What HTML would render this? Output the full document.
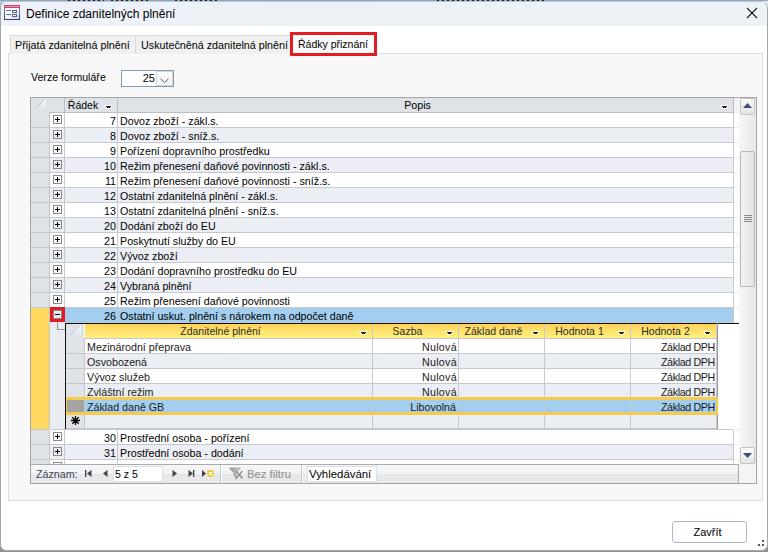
<!DOCTYPE html><html><head><meta charset="utf-8"><title>Definice</title><style>
*{box-sizing:border-box;margin:0;padding:0}
html,body{width:768px;height:552px;overflow:hidden}
body{position:relative;background:#8e9296;font-family:"Liberation Sans",sans-serif;font-size:10.7px;color:#000;line-height:14px}
.a{position:absolute}
.t{position:absolute;white-space:nowrap}
.r{position:absolute;white-space:nowrap;text-align:right}
.c{position:absolute;white-space:nowrap;text-align:center}
</style></head><body>
<div class="a" style="left:0;top:0;width:768px;height:2px;background:#93a5b8"></div>
<div class="a" style="left:68px;top:0;width:36px;height:1px;background:repeating-linear-gradient(90deg,#1a1a1a 0 2px,transparent 2px 5px)"></div>
<div class="a" style="left:111px;top:0;width:37px;height:1px;background:repeating-linear-gradient(90deg,#1a1a1a 0 2px,transparent 2px 5px)"></div>
<div class="a" style="left:175px;top:0;width:44px;height:1px;background:repeating-linear-gradient(90deg,#1a1a1a 0 2px,transparent 2px 5px)"></div>
<div class="a" style="left:437px;top:0;width:107px;height:1px;background:repeating-linear-gradient(90deg,#1a1a1a 0 2px,transparent 2px 5px)"></div>
<div class="a" style="left:754px;top:1px;width:14px;height:9px;background:#ececec"></div>
<div class="a" style="left:0;top:1px;width:9px;height:9px;background:#b6cbe0"></div>
<div class="a" style="left:0;top:1px;width:768px;height:550px;background:#fff;border:1px solid #a3a7ab;border-top-color:#b9c6d3;border-radius:7px 7px 6px 6px;overflow:hidden"></div>
<div class="a" style="left:1px;top:2px;width:766px;height:24px;background:linear-gradient(90deg,#eef1f9,#ebf3f8);border-radius:6px 6px 0 0"></div>
<svg class="a" style="left:4px;top:5px" width="16" height="15" viewBox="0 0 16 15" shape-rendering="crispEdges">
<defs><linearGradient id="ig" x1="0" y1="0" x2="1" y2="1"><stop offset="0" stop-color="#ffffff"/><stop offset="0.5" stop-color="#f4f6fb"/><stop offset="1" stop-color="#c9d4ee"/></linearGradient>
<linearGradient id="ib" x1="0" y1="0" x2="0" y2="1"><stop offset="0" stop-color="#8e9bb3"/><stop offset="1" stop-color="#34425f"/></linearGradient></defs>
<rect x="0" y="0" width="16" height="15" fill="url(#ib)"/>
<rect x="1" y="3" width="14" height="11" fill="url(#ig)"/>
<rect x="0" y="0" width="16" height="3" fill="#c64470"/>
<rect x="1" y="1" width="14" height="1" fill="#e593ae"/>
<rect x="2" y="5" width="5" height="1" fill="#6276a6"/>
<rect x="2" y="9" width="5" height="1" fill="#6276a6"/>
<rect x="8" y="5" width="5" height="3" fill="#56668f"/>
<rect x="9" y="6" width="3" height="1" fill="#ffffff"/>
<rect x="8" y="9" width="5" height="3" fill="#56668f"/>
<rect x="9" y="10" width="3" height="1" fill="#ffffff"/>
</svg>
<div class="t" style="left:26px;top:6px;font-size:12px;line-height:16px;color:#000">Definice zdanitelných plnění</div>
<svg class="a" style="left:746px;top:7px" width="12" height="12" viewBox="0 0 12 12"><path d="M1 1L11 11M11 1L1 11" stroke="#1a1a1a" stroke-width="1.1"/></svg>
<div class="a" style="left:8px;top:53px;width:755px;height:448px;background:#f8f8f8;border:1px solid #dcdcdc"></div>
<div class="a" style="left:10px;top:35px;width:126px;height:19px;background:#f0f0f0;border:1px solid #dadada;border-bottom:none"></div>
<div class="t" style="left:15px;top:38px;font-size:10.75px">Přijatá zdanitelná plnění</div>
<div class="a" style="left:135px;top:35px;width:156px;height:19px;background:#f0f0f0;border:1px solid #dadada;border-bottom:none"></div>
<div class="t" style="left:141px;top:38px;font-size:10.75px">Uskutečněná zdanitelná plnění</div>
<div class="a" style="left:290px;top:32px;width:87px;height:24px;background:#fbfbfb;border:3px solid #e31b23"></div>
<div class="t" style="left:298px;top:37px;font-size:10.5px">Řádky přiznání</div>
<div class="t" style="left:31px;top:70px;font-size:10.6px">Verze formuláře</div>
<div class="a" style="left:121px;top:70px;width:53px;height:17px;background:#fff;border:1px solid #7f9db9"></div>
<div class="r" style="left:122px;top:71px;width:33px;font-size:11px">25</div>
<div class="a" style="left:156px;top:71px;width:17px;height:15px;background:linear-gradient(#fdfdfd,#f3f3f3);border:1px solid #d5d5d5"></div>
<svg class="a" style="left:160px;top:78px" width="9" height="6" viewBox="0 0 9 6"><path d="M0.5 0.8L4.5 4.6L8.5 0.8" fill="none" stroke="#555" stroke-width="1"/></svg>
<div class="a" style="left:30px;top:97px;width:727px;height:387px;background:#fff;border:1px solid #a5a5a5;overflow:hidden">
<div class="a" style="left:0;top:0;width:702px;height:15px;background:#dfe2e7"></div>
<div class="a" style="left:18px;top:14px;width:684px;height:1px;background:#babdc2"></div>
<svg class="a" style="left:4px;top:0px" width="12" height="12" viewBox="0 0 12 12"><defs><linearGradient id="sg1" x1="0" y1="1" x2="1" y2="0"><stop offset="0" stop-color="#dcdfe4"/><stop offset="1" stop-color="#f7f8fa"/></linearGradient></defs><path d="M0 11L11 0V11Z" fill="url(#sg1)"/><path d="M0.5 10.5L10.5 0.5" stroke="#aac6ea" stroke-width="1"/></svg>
<div class="a" style="left:33px;top:0;width:1px;height:15px;background:#babdc2"></div>
<div class="a" style="left:86px;top:0;width:1px;height:15px;background:#babdc2"></div>
<div class="a" style="left:702px;top:0;width:1px;height:15px;background:#babdc2"></div>
<div class="c" style="left:34px;top:0;width:36px;font-size:10.5px;line-height:15px;color:#000">Řádek</div>
<svg class="a" style="left:73px;top:7px" width="9" height="5" viewBox="0 0 9 5" shape-rendering="crispEdges"><path d="M0 0H9V1H8V2H7V3H6V4H3V3H2V2H1V1H0Z" fill="#fff" opacity="0.85"/><rect x="2" y="1" width="5" height="1" fill="#1c1c1c"/><rect x="3" y="2" width="3" height="1" fill="#1c1c1c"/></svg>
<div class="c" style="left:87px;top:0;width:599px;font-size:10.7px;line-height:15px;color:#000">Popis</div>
<svg class="a" style="left:689px;top:7px" width="9" height="5" viewBox="0 0 9 5" shape-rendering="crispEdges"><path d="M0 0H9V1H8V2H7V3H6V4H3V3H2V2H1V1H0Z" fill="#fff" opacity="0.85"/><rect x="2" y="1" width="5" height="1" fill="#1c1c1c"/><rect x="3" y="2" width="3" height="1" fill="#1c1c1c"/></svg>
<div class="a" style="left:703px;top:0;width:5px;height:15px;background:#f1f3f8"></div>
<div class="a" style="left:0;top:15px;width:18px;height:15px;background:#dfe2e7"></div>
<div class="a" style="left:0;top:29px;width:18px;height:1px;background:#c3c6cb"></div>
<div class="a" style="left:18px;top:15px;width:1px;height:15px;background:#c3c6cb"></div>
<div class="a" style="left:19px;top:15px;width:683px;height:14px;background:#fff"></div>
<div class="a" style="left:19px;top:29px;width:683px;height:1px;background:#c6c9cd"></div>
<div class="a" style="left:703px;top:29px;width:5px;height:1px;background:#ececed"></div>
<div class="a" style="left:33px;top:15px;width:1px;height:15px;background:#c6c9cd"></div>
<div class="a" style="left:86px;top:15px;width:1px;height:15px;background:#c6c9cd"></div>
<div class="a" style="left:702px;top:15px;width:1px;height:15px;background:#c6c9cd"></div>
<div class="a" style="left:22px;top:17px;width:9px;height:9px;background:#fff;border:1px solid #8a8a8a"></div>
<div class="a" style="left:24px;top:21px;width:5px;height:1px;background:#000"></div>
<div class="a" style="left:26px;top:19px;width:1px;height:5px;background:#000"></div>
<div class="r" style="left:34px;top:16px;width:51px;font-size:10.7px;line-height:15px">7</div>
<div class="t" style="left:89px;top:16px;font-size:10.7px;line-height:15px">Dovoz zboží - zákl.s.</div>
<div class="a" style="left:0;top:30px;width:18px;height:15px;background:#dfe2e7"></div>
<div class="a" style="left:0;top:44px;width:18px;height:1px;background:#c3c6cb"></div>
<div class="a" style="left:18px;top:30px;width:1px;height:15px;background:#c3c6cb"></div>
<div class="a" style="left:19px;top:30px;width:683px;height:14px;background:#ebeef4"></div>
<div class="a" style="left:19px;top:44px;width:683px;height:1px;background:#c6c9cd"></div>
<div class="a" style="left:703px;top:44px;width:5px;height:1px;background:#ececed"></div>
<div class="a" style="left:33px;top:30px;width:1px;height:15px;background:#c6c9cd"></div>
<div class="a" style="left:86px;top:30px;width:1px;height:15px;background:#c6c9cd"></div>
<div class="a" style="left:702px;top:30px;width:1px;height:15px;background:#c6c9cd"></div>
<div class="a" style="left:22px;top:32px;width:9px;height:9px;background:#ebeef4;border:1px solid #8a8a8a"></div>
<div class="a" style="left:24px;top:36px;width:5px;height:1px;background:#000"></div>
<div class="a" style="left:26px;top:34px;width:1px;height:5px;background:#000"></div>
<div class="r" style="left:34px;top:31px;width:51px;font-size:10.7px;line-height:15px">8</div>
<div class="t" style="left:89px;top:31px;font-size:10.7px;line-height:15px">Dovoz zboží - sníž.s.</div>
<div class="a" style="left:0;top:45px;width:18px;height:15px;background:#dfe2e7"></div>
<div class="a" style="left:0;top:59px;width:18px;height:1px;background:#c3c6cb"></div>
<div class="a" style="left:18px;top:45px;width:1px;height:15px;background:#c3c6cb"></div>
<div class="a" style="left:19px;top:45px;width:683px;height:14px;background:#fff"></div>
<div class="a" style="left:19px;top:59px;width:683px;height:1px;background:#c6c9cd"></div>
<div class="a" style="left:703px;top:59px;width:5px;height:1px;background:#ececed"></div>
<div class="a" style="left:33px;top:45px;width:1px;height:15px;background:#c6c9cd"></div>
<div class="a" style="left:86px;top:45px;width:1px;height:15px;background:#c6c9cd"></div>
<div class="a" style="left:702px;top:45px;width:1px;height:15px;background:#c6c9cd"></div>
<div class="a" style="left:22px;top:47px;width:9px;height:9px;background:#fff;border:1px solid #8a8a8a"></div>
<div class="a" style="left:24px;top:51px;width:5px;height:1px;background:#000"></div>
<div class="a" style="left:26px;top:49px;width:1px;height:5px;background:#000"></div>
<div class="r" style="left:34px;top:46px;width:51px;font-size:10.7px;line-height:15px">9</div>
<div class="t" style="left:89px;top:46px;font-size:10.7px;line-height:15px">Pořízení dopravního prostředku</div>
<div class="a" style="left:0;top:60px;width:18px;height:15px;background:#dfe2e7"></div>
<div class="a" style="left:0;top:74px;width:18px;height:1px;background:#c3c6cb"></div>
<div class="a" style="left:18px;top:60px;width:1px;height:15px;background:#c3c6cb"></div>
<div class="a" style="left:19px;top:60px;width:683px;height:14px;background:#ebeef4"></div>
<div class="a" style="left:19px;top:74px;width:683px;height:1px;background:#c6c9cd"></div>
<div class="a" style="left:703px;top:74px;width:5px;height:1px;background:#ececed"></div>
<div class="a" style="left:33px;top:60px;width:1px;height:15px;background:#c6c9cd"></div>
<div class="a" style="left:86px;top:60px;width:1px;height:15px;background:#c6c9cd"></div>
<div class="a" style="left:702px;top:60px;width:1px;height:15px;background:#c6c9cd"></div>
<div class="a" style="left:22px;top:62px;width:9px;height:9px;background:#ebeef4;border:1px solid #8a8a8a"></div>
<div class="a" style="left:24px;top:66px;width:5px;height:1px;background:#000"></div>
<div class="a" style="left:26px;top:64px;width:1px;height:5px;background:#000"></div>
<div class="r" style="left:34px;top:61px;width:51px;font-size:10.7px;line-height:15px">10</div>
<div class="t" style="left:89px;top:61px;font-size:10.7px;line-height:15px">Režim přenesení daňové povinnosti - zákl.s.</div>
<div class="a" style="left:0;top:75px;width:18px;height:15px;background:#dfe2e7"></div>
<div class="a" style="left:0;top:89px;width:18px;height:1px;background:#c3c6cb"></div>
<div class="a" style="left:18px;top:75px;width:1px;height:15px;background:#c3c6cb"></div>
<div class="a" style="left:19px;top:75px;width:683px;height:14px;background:#fff"></div>
<div class="a" style="left:19px;top:89px;width:683px;height:1px;background:#c6c9cd"></div>
<div class="a" style="left:703px;top:89px;width:5px;height:1px;background:#ececed"></div>
<div class="a" style="left:33px;top:75px;width:1px;height:15px;background:#c6c9cd"></div>
<div class="a" style="left:86px;top:75px;width:1px;height:15px;background:#c6c9cd"></div>
<div class="a" style="left:702px;top:75px;width:1px;height:15px;background:#c6c9cd"></div>
<div class="a" style="left:22px;top:77px;width:9px;height:9px;background:#fff;border:1px solid #8a8a8a"></div>
<div class="a" style="left:24px;top:81px;width:5px;height:1px;background:#000"></div>
<div class="a" style="left:26px;top:79px;width:1px;height:5px;background:#000"></div>
<div class="r" style="left:34px;top:76px;width:51px;font-size:10.7px;line-height:15px">11</div>
<div class="t" style="left:89px;top:76px;font-size:10.7px;line-height:15px">Režim přenesení daňové povinnosti - sníž.s.</div>
<div class="a" style="left:0;top:90px;width:18px;height:15px;background:#dfe2e7"></div>
<div class="a" style="left:0;top:104px;width:18px;height:1px;background:#c3c6cb"></div>
<div class="a" style="left:18px;top:90px;width:1px;height:15px;background:#c3c6cb"></div>
<div class="a" style="left:19px;top:90px;width:683px;height:14px;background:#ebeef4"></div>
<div class="a" style="left:19px;top:104px;width:683px;height:1px;background:#c6c9cd"></div>
<div class="a" style="left:703px;top:104px;width:5px;height:1px;background:#ececed"></div>
<div class="a" style="left:33px;top:90px;width:1px;height:15px;background:#c6c9cd"></div>
<div class="a" style="left:86px;top:90px;width:1px;height:15px;background:#c6c9cd"></div>
<div class="a" style="left:702px;top:90px;width:1px;height:15px;background:#c6c9cd"></div>
<div class="a" style="left:22px;top:92px;width:9px;height:9px;background:#ebeef4;border:1px solid #8a8a8a"></div>
<div class="a" style="left:24px;top:96px;width:5px;height:1px;background:#000"></div>
<div class="a" style="left:26px;top:94px;width:1px;height:5px;background:#000"></div>
<div class="r" style="left:34px;top:91px;width:51px;font-size:10.7px;line-height:15px">12</div>
<div class="t" style="left:89px;top:91px;font-size:10.7px;line-height:15px">Ostatní zdanitelná plnění - zákl.s.</div>
<div class="a" style="left:0;top:105px;width:18px;height:15px;background:#dfe2e7"></div>
<div class="a" style="left:0;top:119px;width:18px;height:1px;background:#c3c6cb"></div>
<div class="a" style="left:18px;top:105px;width:1px;height:15px;background:#c3c6cb"></div>
<div class="a" style="left:19px;top:105px;width:683px;height:14px;background:#fff"></div>
<div class="a" style="left:19px;top:119px;width:683px;height:1px;background:#c6c9cd"></div>
<div class="a" style="left:703px;top:119px;width:5px;height:1px;background:#ececed"></div>
<div class="a" style="left:33px;top:105px;width:1px;height:15px;background:#c6c9cd"></div>
<div class="a" style="left:86px;top:105px;width:1px;height:15px;background:#c6c9cd"></div>
<div class="a" style="left:702px;top:105px;width:1px;height:15px;background:#c6c9cd"></div>
<div class="a" style="left:22px;top:107px;width:9px;height:9px;background:#fff;border:1px solid #8a8a8a"></div>
<div class="a" style="left:24px;top:111px;width:5px;height:1px;background:#000"></div>
<div class="a" style="left:26px;top:109px;width:1px;height:5px;background:#000"></div>
<div class="r" style="left:34px;top:106px;width:51px;font-size:10.7px;line-height:15px">13</div>
<div class="t" style="left:89px;top:106px;font-size:10.7px;line-height:15px">Ostatní zdanitelná plnění - sníž.s.</div>
<div class="a" style="left:0;top:120px;width:18px;height:15px;background:#dfe2e7"></div>
<div class="a" style="left:0;top:134px;width:18px;height:1px;background:#c3c6cb"></div>
<div class="a" style="left:18px;top:120px;width:1px;height:15px;background:#c3c6cb"></div>
<div class="a" style="left:19px;top:120px;width:683px;height:14px;background:#ebeef4"></div>
<div class="a" style="left:19px;top:134px;width:683px;height:1px;background:#c6c9cd"></div>
<div class="a" style="left:703px;top:134px;width:5px;height:1px;background:#ececed"></div>
<div class="a" style="left:33px;top:120px;width:1px;height:15px;background:#c6c9cd"></div>
<div class="a" style="left:86px;top:120px;width:1px;height:15px;background:#c6c9cd"></div>
<div class="a" style="left:702px;top:120px;width:1px;height:15px;background:#c6c9cd"></div>
<div class="a" style="left:22px;top:122px;width:9px;height:9px;background:#ebeef4;border:1px solid #8a8a8a"></div>
<div class="a" style="left:24px;top:126px;width:5px;height:1px;background:#000"></div>
<div class="a" style="left:26px;top:124px;width:1px;height:5px;background:#000"></div>
<div class="r" style="left:34px;top:121px;width:51px;font-size:10.7px;line-height:15px">20</div>
<div class="t" style="left:89px;top:121px;font-size:10.7px;line-height:15px">Dodání zboží do EU</div>
<div class="a" style="left:0;top:135px;width:18px;height:15px;background:#dfe2e7"></div>
<div class="a" style="left:0;top:149px;width:18px;height:1px;background:#c3c6cb"></div>
<div class="a" style="left:18px;top:135px;width:1px;height:15px;background:#c3c6cb"></div>
<div class="a" style="left:19px;top:135px;width:683px;height:14px;background:#fff"></div>
<div class="a" style="left:19px;top:149px;width:683px;height:1px;background:#c6c9cd"></div>
<div class="a" style="left:703px;top:149px;width:5px;height:1px;background:#ececed"></div>
<div class="a" style="left:33px;top:135px;width:1px;height:15px;background:#c6c9cd"></div>
<div class="a" style="left:86px;top:135px;width:1px;height:15px;background:#c6c9cd"></div>
<div class="a" style="left:702px;top:135px;width:1px;height:15px;background:#c6c9cd"></div>
<div class="a" style="left:22px;top:137px;width:9px;height:9px;background:#fff;border:1px solid #8a8a8a"></div>
<div class="a" style="left:24px;top:141px;width:5px;height:1px;background:#000"></div>
<div class="a" style="left:26px;top:139px;width:1px;height:5px;background:#000"></div>
<div class="r" style="left:34px;top:136px;width:51px;font-size:10.7px;line-height:15px">21</div>
<div class="t" style="left:89px;top:136px;font-size:10.7px;line-height:15px">Poskytnutí služby do EU</div>
<div class="a" style="left:0;top:150px;width:18px;height:15px;background:#dfe2e7"></div>
<div class="a" style="left:0;top:164px;width:18px;height:1px;background:#c3c6cb"></div>
<div class="a" style="left:18px;top:150px;width:1px;height:15px;background:#c3c6cb"></div>
<div class="a" style="left:19px;top:150px;width:683px;height:14px;background:#ebeef4"></div>
<div class="a" style="left:19px;top:164px;width:683px;height:1px;background:#c6c9cd"></div>
<div class="a" style="left:703px;top:164px;width:5px;height:1px;background:#ececed"></div>
<div class="a" style="left:33px;top:150px;width:1px;height:15px;background:#c6c9cd"></div>
<div class="a" style="left:86px;top:150px;width:1px;height:15px;background:#c6c9cd"></div>
<div class="a" style="left:702px;top:150px;width:1px;height:15px;background:#c6c9cd"></div>
<div class="a" style="left:22px;top:152px;width:9px;height:9px;background:#ebeef4;border:1px solid #8a8a8a"></div>
<div class="a" style="left:24px;top:156px;width:5px;height:1px;background:#000"></div>
<div class="a" style="left:26px;top:154px;width:1px;height:5px;background:#000"></div>
<div class="r" style="left:34px;top:151px;width:51px;font-size:10.7px;line-height:15px">22</div>
<div class="t" style="left:89px;top:151px;font-size:10.7px;line-height:15px">Vývoz zboží</div>
<div class="a" style="left:0;top:165px;width:18px;height:15px;background:#dfe2e7"></div>
<div class="a" style="left:0;top:179px;width:18px;height:1px;background:#c3c6cb"></div>
<div class="a" style="left:18px;top:165px;width:1px;height:15px;background:#c3c6cb"></div>
<div class="a" style="left:19px;top:165px;width:683px;height:14px;background:#fff"></div>
<div class="a" style="left:19px;top:179px;width:683px;height:1px;background:#c6c9cd"></div>
<div class="a" style="left:703px;top:179px;width:5px;height:1px;background:#ececed"></div>
<div class="a" style="left:33px;top:165px;width:1px;height:15px;background:#c6c9cd"></div>
<div class="a" style="left:86px;top:165px;width:1px;height:15px;background:#c6c9cd"></div>
<div class="a" style="left:702px;top:165px;width:1px;height:15px;background:#c6c9cd"></div>
<div class="a" style="left:22px;top:167px;width:9px;height:9px;background:#fff;border:1px solid #8a8a8a"></div>
<div class="a" style="left:24px;top:171px;width:5px;height:1px;background:#000"></div>
<div class="a" style="left:26px;top:169px;width:1px;height:5px;background:#000"></div>
<div class="r" style="left:34px;top:166px;width:51px;font-size:10.7px;line-height:15px">23</div>
<div class="t" style="left:89px;top:166px;font-size:10.7px;line-height:15px">Dodání dopravního prostředku do EU</div>
<div class="a" style="left:0;top:180px;width:18px;height:15px;background:#dfe2e7"></div>
<div class="a" style="left:0;top:194px;width:18px;height:1px;background:#c3c6cb"></div>
<div class="a" style="left:18px;top:180px;width:1px;height:15px;background:#c3c6cb"></div>
<div class="a" style="left:19px;top:180px;width:683px;height:14px;background:#ebeef4"></div>
<div class="a" style="left:19px;top:194px;width:683px;height:1px;background:#c6c9cd"></div>
<div class="a" style="left:703px;top:194px;width:5px;height:1px;background:#ececed"></div>
<div class="a" style="left:33px;top:180px;width:1px;height:15px;background:#c6c9cd"></div>
<div class="a" style="left:86px;top:180px;width:1px;height:15px;background:#c6c9cd"></div>
<div class="a" style="left:702px;top:180px;width:1px;height:15px;background:#c6c9cd"></div>
<div class="a" style="left:22px;top:182px;width:9px;height:9px;background:#ebeef4;border:1px solid #8a8a8a"></div>
<div class="a" style="left:24px;top:186px;width:5px;height:1px;background:#000"></div>
<div class="a" style="left:26px;top:184px;width:1px;height:5px;background:#000"></div>
<div class="r" style="left:34px;top:181px;width:51px;font-size:10.7px;line-height:15px">24</div>
<div class="t" style="left:89px;top:181px;font-size:10.7px;line-height:15px">Vybraná plnění</div>
<div class="a" style="left:0;top:195px;width:18px;height:15px;background:#dfe2e7"></div>
<div class="a" style="left:0;top:209px;width:18px;height:1px;background:#c3c6cb"></div>
<div class="a" style="left:18px;top:195px;width:1px;height:15px;background:#c3c6cb"></div>
<div class="a" style="left:19px;top:195px;width:683px;height:14px;background:#fff"></div>
<div class="a" style="left:19px;top:209px;width:683px;height:1px;background:#c6c9cd"></div>
<div class="a" style="left:703px;top:209px;width:5px;height:1px;background:#ececed"></div>
<div class="a" style="left:33px;top:195px;width:1px;height:15px;background:#c6c9cd"></div>
<div class="a" style="left:86px;top:195px;width:1px;height:15px;background:#c6c9cd"></div>
<div class="a" style="left:702px;top:195px;width:1px;height:15px;background:#c6c9cd"></div>
<div class="a" style="left:22px;top:197px;width:9px;height:9px;background:#fff;border:1px solid #8a8a8a"></div>
<div class="a" style="left:24px;top:201px;width:5px;height:1px;background:#000"></div>
<div class="a" style="left:26px;top:199px;width:1px;height:5px;background:#000"></div>
<div class="r" style="left:34px;top:196px;width:51px;font-size:10.7px;line-height:15px">25</div>
<div class="t" style="left:89px;top:196px;font-size:10.7px;line-height:15px">Režim přenesení daňové povinnosti</div>
<div class="a" style="left:0;top:210px;width:18px;height:15px;background:#ffd95f"></div>
<div class="a" style="left:18px;top:210px;width:1px;height:15px;background:#c3c6cb"></div>
<div class="a" style="left:19px;top:210px;width:683px;height:14px;background:#a3cef0"></div>
<div class="a" style="left:19px;top:224px;width:683px;height:1px;background:#c6c9cd"></div>
<div class="a" style="left:703px;top:224px;width:5px;height:1px;background:#ececed"></div>
<div class="a" style="left:33px;top:210px;width:1px;height:15px;background:#c6c9cd"></div>
<div class="a" style="left:86px;top:210px;width:1px;height:15px;background:#c6c9cd"></div>
<div class="a" style="left:702px;top:210px;width:1px;height:15px;background:#c6c9cd"></div>
<div class="a" style="left:19px;top:209px;width:15px;height:15px;background:#e31b23"></div>
<div class="a" style="left:22px;top:212px;width:9px;height:9px;background:#e6ebef;border:1px solid #8a8a8a"></div>
<div class="a" style="left:24px;top:216px;width:5px;height:1px;background:#000"></div>
<div class="r" style="left:34px;top:211px;width:51px;font-size:10.7px;line-height:15px">26</div>
<div class="t" style="left:89px;top:211px;font-size:10.7px;line-height:15px">Ostatní uskut. plnění s nárokem na odpočet daně</div>
<div class="a" style="left:0;top:332px;width:18px;height:15px;background:#dfe2e7"></div>
<div class="a" style="left:0;top:346px;width:18px;height:1px;background:#c3c6cb"></div>
<div class="a" style="left:18px;top:332px;width:1px;height:15px;background:#c3c6cb"></div>
<div class="a" style="left:19px;top:332px;width:683px;height:14px;background:#fff"></div>
<div class="a" style="left:19px;top:346px;width:683px;height:1px;background:#c6c9cd"></div>
<div class="a" style="left:703px;top:346px;width:5px;height:1px;background:#ececed"></div>
<div class="a" style="left:33px;top:332px;width:1px;height:15px;background:#c6c9cd"></div>
<div class="a" style="left:86px;top:332px;width:1px;height:15px;background:#c6c9cd"></div>
<div class="a" style="left:702px;top:332px;width:1px;height:15px;background:#c6c9cd"></div>
<div class="a" style="left:22px;top:334px;width:9px;height:9px;background:#fff;border:1px solid #8a8a8a"></div>
<div class="a" style="left:24px;top:338px;width:5px;height:1px;background:#000"></div>
<div class="a" style="left:26px;top:336px;width:1px;height:5px;background:#000"></div>
<div class="r" style="left:34px;top:333px;width:51px;font-size:10.7px;line-height:15px">30</div>
<div class="t" style="left:89px;top:333px;font-size:10.7px;line-height:15px">Prostřední osoba - pořízení</div>
<div class="a" style="left:0;top:347px;width:18px;height:15px;background:#dfe2e7"></div>
<div class="a" style="left:0;top:361px;width:18px;height:1px;background:#c3c6cb"></div>
<div class="a" style="left:18px;top:347px;width:1px;height:15px;background:#c3c6cb"></div>
<div class="a" style="left:19px;top:347px;width:683px;height:14px;background:#ebeef4"></div>
<div class="a" style="left:19px;top:361px;width:683px;height:1px;background:#c6c9cd"></div>
<div class="a" style="left:703px;top:361px;width:5px;height:1px;background:#ececed"></div>
<div class="a" style="left:33px;top:347px;width:1px;height:15px;background:#c6c9cd"></div>
<div class="a" style="left:86px;top:347px;width:1px;height:15px;background:#c6c9cd"></div>
<div class="a" style="left:702px;top:347px;width:1px;height:15px;background:#c6c9cd"></div>
<div class="a" style="left:22px;top:349px;width:9px;height:9px;background:#ebeef4;border:1px solid #8a8a8a"></div>
<div class="a" style="left:24px;top:353px;width:5px;height:1px;background:#000"></div>
<div class="a" style="left:26px;top:351px;width:1px;height:5px;background:#000"></div>
<div class="r" style="left:34px;top:348px;width:51px;font-size:10.7px;line-height:15px">31</div>
<div class="t" style="left:89px;top:348px;font-size:10.7px;line-height:15px">Prostřední osoba - dodání</div>
<div class="a" style="left:0;top:362px;width:18px;height:15px;background:#dfe2e7"></div>
<div class="a" style="left:0;top:376px;width:18px;height:1px;background:#c3c6cb"></div>
<div class="a" style="left:18px;top:362px;width:1px;height:15px;background:#c3c6cb"></div>
<div class="a" style="left:19px;top:362px;width:683px;height:14px;background:#fff"></div>
<div class="a" style="left:19px;top:376px;width:683px;height:1px;background:#c6c9cd"></div>
<div class="a" style="left:703px;top:376px;width:5px;height:1px;background:#ececed"></div>
<div class="a" style="left:33px;top:362px;width:1px;height:15px;background:#c6c9cd"></div>
<div class="a" style="left:86px;top:362px;width:1px;height:15px;background:#c6c9cd"></div>
<div class="a" style="left:702px;top:362px;width:1px;height:15px;background:#c6c9cd"></div>
<div class="a" style="left:22px;top:364px;width:9px;height:9px;background:#fff;border:1px solid #8a8a8a"></div>
<div class="a" style="left:24px;top:368px;width:5px;height:1px;background:#000"></div>
<div class="a" style="left:26px;top:366px;width:1px;height:5px;background:#000"></div>
<div class="r" style="left:34px;top:363px;width:51px;font-size:10.7px;line-height:15px">32</div>
<div class="t" style="left:89px;top:363px;font-size:10.7px;line-height:15px">Prostřední osoba - </div>
<div class="a" style="left:0;top:224px;width:18px;height:107px;background:#ffd95f"></div>
<div class="a" style="left:18px;top:224px;width:1px;height:107px;background:#c3c6cb"></div>
<div class="a" style="left:19px;top:224px;width:15px;height:107px;background:#e9ecf1"></div>
<div class="a" style="left:26px;top:224px;width:1px;height:8px;background:#8f949a"></div>
<div class="a" style="left:26px;top:231px;width:8px;height:1px;background:#8f949a"></div>
<div class="a" style="left:35px;top:225px;width:673px;height:106px;background:#fff"></div>
<div class="a" style="left:34px;top:225px;width:674px;height:1px;background:#111"></div>
<div class="a" style="left:34px;top:225px;width:1px;height:106px;background:#111"></div>
<div class="a" style="left:19px;top:331px;width:683px;height:1px;background:#c6c9cd"></div>
<div class="a" style="left:703px;top:331px;width:5px;height:1px;background:#ececed"></div>
<div class="a" style="left:0;top:331px;width:18px;height:1px;background:#c3c6cb"></div>
<div class="a" style="left:35px;top:226px;width:18px;height:105px;background:#dfe2e7"></div>
<svg class="a" style="left:39px;top:226px" width="12" height="12" viewBox="0 0 12 12"><defs><linearGradient id="sg2" x1="0" y1="1" x2="1" y2="0"><stop offset="0" stop-color="#dcdfe4"/><stop offset="1" stop-color="#f7f8fa"/></linearGradient></defs><path d="M0 11L11 0V11Z" fill="url(#sg2)"/><path d="M0.5 10.5L10.5 0.5" stroke="#aac6ea" stroke-width="1"/></svg>
<div class="a" style="left:53px;top:240px;width:1px;height:91px;background:#c3c6cb"></div>
<div class="a" style="left:35px;top:255px;width:18px;height:1px;background:#c3c6cb"></div>
<div class="a" style="left:35px;top:270px;width:18px;height:1px;background:#c3c6cb"></div>
<div class="a" style="left:35px;top:285px;width:18px;height:1px;background:#c3c6cb"></div>
<div class="a" style="left:35px;top:300px;width:18px;height:1px;background:#c3c6cb"></div>
<div class="a" style="left:35px;top:315px;width:18px;height:1px;background:#c3c6cb"></div>
<div class="a" style="left:54px;top:226px;width:631px;height:14px;background:linear-gradient(#fdd25a,#fff07f)"></div>
<div class="a" style="left:54px;top:240px;width:631px;height:1px;background:#c4c7cc"></div>
<div class="a" style="left:341px;top:226px;width:1px;height:105px;background:#c6c9cd"></div>
<div class="c" style="left:54px;top:226px;width:271px;font-size:10.5px;line-height:15px;color:#2b2b2b">Zdanitelné plnění</div>
<svg class="a" style="left:328px;top:233px" width="9" height="5" viewBox="0 0 9 5" shape-rendering="crispEdges"><path d="M0 0H9V1H8V2H7V3H6V4H3V3H2V2H1V1H0Z" fill="#fff" opacity="0.85"/><rect x="2" y="1" width="5" height="1" fill="#1c1c1c"/><rect x="3" y="2" width="3" height="1" fill="#1c1c1c"/></svg>
<div class="a" style="left:427px;top:226px;width:1px;height:105px;background:#c6c9cd"></div>
<div class="c" style="left:342px;top:226px;width:69px;font-size:10.5px;line-height:15px;color:#2b2b2b">Sazba</div>
<svg class="a" style="left:414px;top:233px" width="9" height="5" viewBox="0 0 9 5" shape-rendering="crispEdges"><path d="M0 0H9V1H8V2H7V3H6V4H3V3H2V2H1V1H0Z" fill="#fff" opacity="0.85"/><rect x="2" y="1" width="5" height="1" fill="#1c1c1c"/><rect x="3" y="2" width="3" height="1" fill="#1c1c1c"/></svg>
<div class="a" style="left:513px;top:226px;width:1px;height:105px;background:#c6c9cd"></div>
<div class="c" style="left:428px;top:226px;width:69px;font-size:10.5px;line-height:15px;color:#2b2b2b">Základ daně</div>
<svg class="a" style="left:500px;top:233px" width="9" height="5" viewBox="0 0 9 5" shape-rendering="crispEdges"><path d="M0 0H9V1H8V2H7V3H6V4H3V3H2V2H1V1H0Z" fill="#fff" opacity="0.85"/><rect x="2" y="1" width="5" height="1" fill="#1c1c1c"/><rect x="3" y="2" width="3" height="1" fill="#1c1c1c"/></svg>
<div class="a" style="left:599px;top:226px;width:1px;height:105px;background:#c6c9cd"></div>
<div class="c" style="left:514px;top:226px;width:69px;font-size:10.5px;line-height:15px;color:#2b2b2b">Hodnota 1</div>
<svg class="a" style="left:586px;top:233px" width="9" height="5" viewBox="0 0 9 5" shape-rendering="crispEdges"><path d="M0 0H9V1H8V2H7V3H6V4H3V3H2V2H1V1H0Z" fill="#fff" opacity="0.85"/><rect x="2" y="1" width="5" height="1" fill="#1c1c1c"/><rect x="3" y="2" width="3" height="1" fill="#1c1c1c"/></svg>
<div class="a" style="left:685px;top:226px;width:1px;height:105px;background:#c6c9cd"></div>
<div class="c" style="left:600px;top:226px;width:69px;font-size:10.5px;line-height:15px;color:#2b2b2b">Hodnota 2</div>
<svg class="a" style="left:672px;top:233px" width="9" height="5" viewBox="0 0 9 5" shape-rendering="crispEdges"><path d="M0 0H9V1H8V2H7V3H6V4H3V3H2V2H1V1H0Z" fill="#fff" opacity="0.85"/><rect x="2" y="1" width="5" height="1" fill="#1c1c1c"/><rect x="3" y="2" width="3" height="1" fill="#1c1c1c"/></svg>
<div class="a" style="left:686px;top:225px;width:1px;height:106px;background:#9a9a9a"></div>
<div class="a" style="left:54px;top:241px;width:631px;height:14px;background:#fff"></div>
<div class="a" style="left:54px;top:255px;width:631px;height:1px;background:#c6c9cd"></div>
<div class="a" style="left:341px;top:241px;width:1px;height:15px;background:#c6c9cd"></div>
<div class="a" style="left:427px;top:241px;width:1px;height:15px;background:#c6c9cd"></div>
<div class="a" style="left:513px;top:241px;width:1px;height:15px;background:#c6c9cd"></div>
<div class="a" style="left:599px;top:241px;width:1px;height:15px;background:#c6c9cd"></div>
<div class="a" style="left:685px;top:241px;width:1px;height:15px;background:#c6c9cd"></div>
<div class="t" style="left:56px;top:242px;font-size:10.7px;line-height:15px;color:#1a1a1a">Mezinárodní přeprava</div>
<div class="r" style="left:342px;top:242px;width:84px;font-size:10.7px;letter-spacing:0.3px;line-height:15px;color:#1a1a1a">Nulová</div>
<div class="r" style="left:600px;top:242px;width:84px;font-size:10.7px;letter-spacing:-0.35px;line-height:15px;color:#1a1a1a">Základ DPH</div>
<div class="a" style="left:54px;top:256px;width:631px;height:14px;background:#ebeef4"></div>
<div class="a" style="left:54px;top:270px;width:631px;height:1px;background:#c6c9cd"></div>
<div class="a" style="left:341px;top:256px;width:1px;height:15px;background:#c6c9cd"></div>
<div class="a" style="left:427px;top:256px;width:1px;height:15px;background:#c6c9cd"></div>
<div class="a" style="left:513px;top:256px;width:1px;height:15px;background:#c6c9cd"></div>
<div class="a" style="left:599px;top:256px;width:1px;height:15px;background:#c6c9cd"></div>
<div class="a" style="left:685px;top:256px;width:1px;height:15px;background:#c6c9cd"></div>
<div class="t" style="left:56px;top:257px;font-size:10.7px;line-height:15px;color:#1a1a1a">Osvobozená</div>
<div class="r" style="left:342px;top:257px;width:84px;font-size:10.7px;letter-spacing:0.3px;line-height:15px;color:#1a1a1a">Nulová</div>
<div class="r" style="left:600px;top:257px;width:84px;font-size:10.7px;letter-spacing:-0.35px;line-height:15px;color:#1a1a1a">Základ DPH</div>
<div class="a" style="left:54px;top:271px;width:631px;height:14px;background:#fff"></div>
<div class="a" style="left:54px;top:285px;width:631px;height:1px;background:#c6c9cd"></div>
<div class="a" style="left:341px;top:271px;width:1px;height:15px;background:#c6c9cd"></div>
<div class="a" style="left:427px;top:271px;width:1px;height:15px;background:#c6c9cd"></div>
<div class="a" style="left:513px;top:271px;width:1px;height:15px;background:#c6c9cd"></div>
<div class="a" style="left:599px;top:271px;width:1px;height:15px;background:#c6c9cd"></div>
<div class="a" style="left:685px;top:271px;width:1px;height:15px;background:#c6c9cd"></div>
<div class="t" style="left:56px;top:272px;font-size:10.7px;line-height:15px;color:#1a1a1a">Vývoz služeb</div>
<div class="r" style="left:342px;top:272px;width:84px;font-size:10.7px;letter-spacing:0.3px;line-height:15px;color:#1a1a1a">Nulová</div>
<div class="r" style="left:600px;top:272px;width:84px;font-size:10.7px;letter-spacing:-0.35px;line-height:15px;color:#1a1a1a">Základ DPH</div>
<div class="a" style="left:54px;top:286px;width:631px;height:14px;background:#ebeef4"></div>
<div class="a" style="left:54px;top:300px;width:631px;height:1px;background:#c6c9cd"></div>
<div class="a" style="left:341px;top:286px;width:1px;height:15px;background:#c6c9cd"></div>
<div class="a" style="left:427px;top:286px;width:1px;height:15px;background:#c6c9cd"></div>
<div class="a" style="left:513px;top:286px;width:1px;height:15px;background:#c6c9cd"></div>
<div class="a" style="left:599px;top:286px;width:1px;height:15px;background:#c6c9cd"></div>
<div class="a" style="left:685px;top:286px;width:1px;height:15px;background:#c6c9cd"></div>
<div class="t" style="left:56px;top:287px;font-size:10.7px;line-height:15px;color:#1a1a1a">Zvláštní režim</div>
<div class="r" style="left:342px;top:287px;width:84px;font-size:10.7px;letter-spacing:0.3px;line-height:15px;color:#1a1a1a">Nulová</div>
<div class="r" style="left:600px;top:287px;width:84px;font-size:10.7px;letter-spacing:-0.35px;line-height:15px;color:#1a1a1a">Základ DPH</div>
<div class="a" style="left:54px;top:301px;width:631px;height:14px;background:#a3cef0"></div>
<div class="a" style="left:54px;top:315px;width:631px;height:1px;background:#c6c9cd"></div>
<div class="a" style="left:341px;top:301px;width:1px;height:15px;background:#c6c9cd"></div>
<div class="a" style="left:427px;top:301px;width:1px;height:15px;background:#c6c9cd"></div>
<div class="a" style="left:513px;top:301px;width:1px;height:15px;background:#c6c9cd"></div>
<div class="a" style="left:599px;top:301px;width:1px;height:15px;background:#c6c9cd"></div>
<div class="a" style="left:685px;top:301px;width:1px;height:15px;background:#c6c9cd"></div>
<div class="t" style="left:56px;top:302px;font-size:10.7px;line-height:15px;color:#1a1a1a">Základ daně GB</div>
<div class="r" style="left:342px;top:302px;width:83px;font-size:10.7px;letter-spacing:0px;line-height:15px;color:#1a1a1a">Libovolná</div>
<div class="r" style="left:600px;top:302px;width:84px;font-size:10.7px;letter-spacing:-0.35px;line-height:15px;color:#1a1a1a">Základ DPH</div>
<div class="a" style="left:54px;top:316px;width:631px;height:14px;background:#ebeef4"></div>
<div class="a" style="left:341px;top:316px;width:1px;height:15px;background:#c6c9cd"></div>
<div class="a" style="left:427px;top:316px;width:1px;height:15px;background:#c6c9cd"></div>
<div class="a" style="left:513px;top:316px;width:1px;height:15px;background:#c6c9cd"></div>
<div class="a" style="left:599px;top:316px;width:1px;height:15px;background:#c6c9cd"></div>
<div class="a" style="left:685px;top:316px;width:1px;height:15px;background:#c6c9cd"></div>
<div class="a" style="left:35px;top:330px;width:651px;height:1px;background:#c0c3c8"></div>
<svg class="a" style="left:40px;top:318px" width="9" height="9" viewBox="0 0 9 9"><path d="M4.5 0V9M0 4.5H9M1.3 1.3L7.7 7.7M7.7 1.3L1.3 7.7" stroke="#000" stroke-width="1.3"/><circle cx="4.5" cy="4.5" r="1.6" fill="#000"/></svg>
<div class="a" style="left:35px;top:299px;width:652px;height:18px;border:3px solid #f4cb4b;border-left-width:1px;border-right-width:2px"></div>
<div class="a" style="left:36px;top:302px;width:17px;height:12px;background:#a4a4a4"></div>
<div class="a" style="left:708px;top:0;width:17px;height:366px;background:linear-gradient(90deg,#f7f7f7,#e8e8e8)"></div>
<div class="a" style="left:709px;top:0px;width:15px;height:17px;background:linear-gradient(#fbfbfb,#e4e4e4);border:1px solid #c4c4c4;border-radius:2px"></div><svg class="a" style="left:712px;top:5px" width="9" height="5" viewBox="0 0 9 5"><path d="M4.5 0L9 5H0Z" fill="#3d4d7a"/></svg>
<div class="a" style="left:709px;top:349px;width:15px;height:17px;background:linear-gradient(#fbfbfb,#e4e4e4);border:1px solid #c4c4c4;border-radius:2px"></div><svg class="a" style="left:712px;top:355px" width="9" height="5" viewBox="0 0 9 5"><path d="M0 0H9L4.5 5Z" fill="#3d4d7a"/></svg>
<div class="a" style="left:709px;top:53px;width:15px;height:136px;background:linear-gradient(90deg,#f3f3f3,#e2e2e2);border:1px solid #b9b9b9;border-radius:2px"></div>
<div class="a" style="left:713px;top:117px;width:8px;height:1px;background:#8a8a8a"></div>
<div class="a" style="left:713px;top:119px;width:8px;height:1px;background:#8a8a8a"></div>
<div class="a" style="left:713px;top:121px;width:8px;height:1px;background:#8a8a8a"></div>
<div class="a" style="left:713px;top:123px;width:8px;height:1px;background:#8a8a8a"></div>
<div class="a" style="left:708px;top:366px;width:17px;height:19px;background:#f4f4f4"></div>
<div class="a" style="left:0;top:366px;width:708px;height:1px;background:#a8acb2"></div>
<div class="a" style="left:0;top:367px;width:707px;height:18px;background:linear-gradient(#f5f6f8 0%,#f1f2f4 50%,#e5e7ea 50%,#e7e9ec 100%)"></div>
<div class="a" style="left:707px;top:366px;width:1px;height:19px;background:#a8acb2"></div>
<div class="t" style="left:5px;top:368px;font-size:10.7px;line-height:16px;color:#3b4656">Záznam:</div>
<svg class="a" style="left:54px;top:372px" width="7" height="7" viewBox="0 0 7 7"><rect x="0" y="0" width="1.3" height="7" fill="#3d4044"/><path d="M6.5 0V7L2 3.5Z" fill="#3d4044"/></svg>
<svg class="a" style="left:72px;top:372px" width="5" height="7" viewBox="0 0 5 7"><path d="M4.5 0V7L0 3.5Z" fill="#3d4044"/></svg>
<div class="a" style="left:82px;top:368px;width:50px;height:16px;background:#fff;border:1px solid #dcdfe3"></div>
<div class="t" style="left:84px;top:368px;font-size:10.6px;line-height:16px;color:#000">5 z 5</div>
<svg class="a" style="left:141px;top:372px" width="5" height="7" viewBox="0 0 5 7"><path d="M0.5 0V7L5 3.5Z" fill="#3d4044"/></svg>
<svg class="a" style="left:157px;top:372px" width="7" height="7" viewBox="0 0 7 7"><path d="M0.5 0V7L5 3.5Z" fill="#3d4044"/><rect x="5" y="0" width="1.3" height="7" fill="#3d4044"/></svg>
<svg class="a" style="left:171px;top:372px" width="5" height="7" viewBox="0 0 5 7"><path d="M0 0V7L4 3.5Z" fill="#3d4044"/></svg>
<svg class="a" style="left:176px;top:372px" width="7" height="7" viewBox="0 0 7 7" shape-rendering="crispEdges"><rect x="0" y="0" width="7" height="7" fill="#f9e27c"/><rect x="2" y="2" width="3" height="3" fill="#fdf3c0"/><rect x="3" y="3" width="1" height="1" fill="#fffbea"/><rect x="3" y="0" width="1" height="1" fill="#e3ad14"/><rect x="3" y="1" width="1" height="1" fill="#e3ad14"/><rect x="0" y="3" width="1" height="1" fill="#e3ad14"/><rect x="1" y="3" width="1" height="1" fill="#e3ad14"/><rect x="5" y="3" width="1" height="1" fill="#e3ad14"/><rect x="6" y="3" width="1" height="1" fill="#e3ad14"/><rect x="3" y="5" width="1" height="1" fill="#e3ad14"/><rect x="3" y="6" width="1" height="1" fill="#e3ad14"/><rect x="1" y="1" width="1" height="1" fill="#e3ad14"/><rect x="5" y="1" width="1" height="1" fill="#e3ad14"/><rect x="1" y="5" width="1" height="1" fill="#e3ad14"/><rect x="5" y="5" width="1" height="1" fill="#e3ad14"/></svg>
<div class="a" style="left:189px;top:367px;width:1px;height:18px;background:#c5c8cc"></div>
<div class="a" style="left:190px;top:367px;width:1px;height:18px;background:#fafafa"></div>
<svg class="a" style="left:198px;top:369px" width="15" height="14" viewBox="0 0 15 14"><defs><linearGradient id="fg" x1="0" y1="0" x2="1" y2="0"><stop offset="0" stop-color="#8c8c8c"/><stop offset="1" stop-color="#e0e0e0"/></linearGradient></defs><path d="M0.5 1H11.5L7 6V10L5 9V6Z" fill="url(#fg)" stroke="#9a9a9a" stroke-width="0.8"/><path d="M7 4L13.5 11.5M13.5 4L6.5 12" stroke="#8e8e8e" stroke-width="1.4"/></svg>
<div class="t" style="left:216px;top:368px;font-size:11.3px;line-height:16px;color:#8d8d8d">Bez filtru</div>
<div class="a" style="left:270px;top:367px;width:1px;height:18px;background:#c5c8cc"></div>
<div class="a" style="left:271px;top:367px;width:1px;height:18px;background:#fafafa"></div>
<div class="a" style="left:276px;top:368px;width:70px;height:16px;background:#fff;border:1px solid #dcdfe3"></div>
<div class="t" style="left:278px;top:368px;font-size:11.4px;line-height:16px;color:#000">Vyhledávání</div>
</div>
<div class="a" style="left:672px;top:521px;width:75px;height:22px;background:#fdfdfd;border:1px solid #adb9c9;border-radius:3px"></div>
<div class="c" style="left:670px;top:524px;width:75px;font-size:11px;line-height:16px;color:#000">Zavřít</div>
<div class="a" style="left:761.5px;top:539.5px;width:2px;height:2px;background:#222;border-radius:1px"></div>
<div class="a" style="left:757.5px;top:543.5px;width:2px;height:2px;background:#222;border-radius:1px"></div>
<div class="a" style="left:761.5px;top:543.5px;width:2px;height:2px;background:#222;border-radius:1px"></div>
</body></html>
